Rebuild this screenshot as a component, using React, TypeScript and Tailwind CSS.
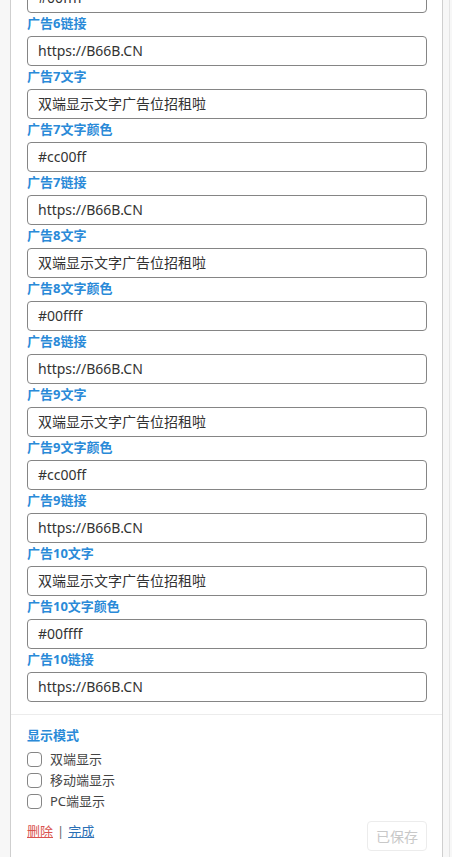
import React from "react"

const font = { fontFamily: '"Noto Sans", "Noto Sans CJK SC", sans-serif' }

type Field = { label: string; value: string }

const fields: Field[] = []
for (let n = 6; n <= 10; n++) {
  const color = n % 2 === 0 ? "#00ffff" : "#cc00ff"
  if (n > 6) {
    fields.push({ label: `广告${n}文字`, value: "双端显示文字广告位招租啦" })
    fields.push({ label: `广告${n}文字颜色`, value: color })
  }
  fields.push({ label: `广告${n}链接`, value: "https://B66B.CN" })
}

function TextInput({ value }: { value: string }) {
  return (
    <div className="h-[30px] w-[400px] shrink-0 rounded-[4px] border border-[#858585] bg-white pl-[10px] text-[14px] leading-[28px] text-[#333]">
      {value}
    </div>
  )
}

function Checkbox({ label }: { label: string }) {
  return (
    <label className="flex h-[21px] items-center gap-[8px]">
      <span className="h-[15px] w-[15px] rounded-[4px] border border-[#858585] bg-white" />
      <span className="text-[13px] text-[#444]">{label}</span>
    </label>
  )
}

export default function App() {
  return (
    <div className="relative h-[857px] w-[452px] overflow-hidden bg-[#f7f7f7] pl-[10px]" style={font}>
      <div className="flex h-full w-[433px] flex-col overflow-hidden border-x border-[#cfcfcf] bg-white">
        <div className="-mt-[17px] pl-[16px] pb-[12px]">
          <TextInput value="#00ffff" />
          {fields.map((f) => (
            <div key={f.label} className="pt-[1px]">
              <div className="mb-[4px] text-[13px] font-bold leading-[18px] text-[#2a8ad8]">{f.label}</div>
              <TextInput value={f.value} />
            </div>
          ))}
        </div>
        <div className="border-t border-[#ececec] pl-[16px] pt-[11px]">
          <div className="mb-[5px] text-[13px] font-bold leading-[18px] text-[#2a8ad8]">显示模式</div>
          <Checkbox label="双端显示" />
          <Checkbox label="移动端显示" />
          <Checkbox label="PC端显示" />
          <div className="mt-[9px] flex w-[400px] items-start justify-between">
            <div className="text-[13px] leading-[20px] text-[#666]">
              <a className="text-[#d9534f] underline">删除</a>
              <span className="mx-[4px]">|</span>
              <a className="text-[#2a6fb5] underline">完成</a>
            </div>
            <button className="h-[30px] w-[60px] rounded-[4px] border border-[#ececec] bg-white text-[14px] text-[#c8c8c8]">
              已保存
            </button>
          </div>
        </div>
      </div>
      <div className="absolute right-[2px] top-0 h-full w-px bg-[#e4e4e4]" />
    </div>
  )
}
